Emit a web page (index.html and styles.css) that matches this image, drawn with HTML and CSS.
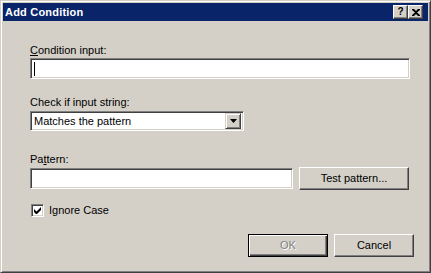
FILE: index.html
```html
<!DOCTYPE html>
<html>
<head>
<meta charset="utf-8">
<link rel="stylesheet" href="styles.css">
</head>
<body>
<div class="window">
  <div class="titlebar">
    <span class="title">Add Condition</span>
    <div class="caption-buttons">
      <div class="cap-btn help">?</div>
      <div class="cap-btn close">
        <svg width="8" height="7" viewBox="0 0 8 7"><path d="M0 0h2l2 2 2-2h2v1L5 3.5 8 6v1H6L4 5 2 7H0V6l3-2.5L0 1z" fill="#000"/></svg>
      </div>
    </div>
  </div>
  <div class="content">
    <div class="label"><u>C</u>ondition input:</div>
    <div class="field wide"><span class="caret"></span></div>

    <div class="label gap2">Check if input string:</div>
    <div class="field select">
      <span class="select-text">Matches the pattern</span>
      <div class="drop-btn">
        <svg width="7" height="4" viewBox="0 0 7 4"><path d="M0 0h7L3.5 4z" fill="#000"/></svg>
      </div>
    </div>

    <div class="label gap3">Pa<u>t</u>tern:</div>
    <div class="pattern-row">
      <div class="field pattern"></div>
      <div class="btn test">Test pattern...</div>
    </div>

    <div class="check-row">
      <div class="checkbox">
        <svg width="7" height="7" viewBox="0 0 7 7"><path d="M0 2v3l2 2h1l4-4V0L2.5 4.5z" fill="#000"/></svg>
      </div>
      <span class="check-label">Ignore Case</span>
    </div>

    <div class="button-row">
      <div class="btn default disabled">OK</div>
      <div class="btn">Cancel</div>
    </div>
  </div>
</div>
</body>
</html>
```
FILE: styles.css
```css
html, body {
  margin: 0;
  padding: 0;
  background: #d4d0c8;
}
body {
  font-family: "Liberation Sans", Arial, sans-serif;
  font-size: 11px;
  color: #000;
}
.window {
  box-sizing: border-box;
  width: 431px;
  height: 273px;
  background: #d4d0c8;
  border: 1px solid;
  border-color: #d4d0c8 #404040 #404040 #d4d0c8;
  box-shadow: inset 1px 1px #fff, inset -1px -1px #808080;
  padding: 2px;
}
.titlebar {
  height: 18px;
  background: #0a246a;
  display: flex;
  align-items: center;
  justify-content: space-between;
  padding-left: 2px;
}
.title {
  color: #fff;
  font-weight: bold;
  font-size: 11px;
  line-height: 13px;
  letter-spacing: 0.2px;
}
.caption-buttons {
  display: flex;
  margin-right: 5px;
}
.cap-btn {
  box-sizing: border-box;
  width: 15px;
  height: 14px;
  background: #d4d0c8;
  border: 1px solid;
  border-color: #fff #404040 #404040 #fff;
  box-shadow: inset -1px -1px #808080;
  display: flex;
  align-items: center;
  justify-content: center;
  font-weight: bold;
  font-size: 10px;
  line-height: 10px;
}
.content {
  display: flex;
  flex-direction: column;
  align-items: flex-start;
  padding: 23px 14px 0 27px;
}
.label {
  line-height: 13px;
  height: 13px;
  margin-bottom: 1px;
}
.gap2 { margin-top: 17px; margin-bottom: 2px; }
.gap3 { margin-top: 22px; margin-bottom: 1px; }
u { text-decoration: underline; text-underline-offset: 1px; }
.field {
  box-sizing: border-box;
  background: #fff;
  border: 1px solid;
  border-color: #808080 #fff #fff #808080;
  box-shadow: inset 1px 1px #404040, inset -1px -1px #d4d0c8;
  height: 21px;
}
.wide {
  width: 380px;
  display: flex;
  align-items: center;
  padding-left: 3px;
}
.caret {
  width: 1px;
  height: 14px;
  background: #000;
}
.select {
  width: 214px;
  height: 20px;
  display: flex;
  align-items: center;
  justify-content: space-between;
  padding: 2px;
}
.select-text {
  padding-left: 1px;
  line-height: 13px;
}
.drop-btn {
  box-sizing: border-box;
  width: 16px;
  height: 16px;
  background: #d4d0c8;
  border: 1px solid;
  border-color: #d4d0c8 #404040 #404040 #d4d0c8;
  box-shadow: inset 1px 1px #fff, inset -1px -1px #808080;
  display: flex;
  align-items: center;
  justify-content: center;
}
.pattern-row {
  display: flex;
  align-items: center;
  gap: 6px;
}
.pattern {
  width: 263px;
}
.btn {
  box-sizing: border-box;
  width: 80px;
  height: 23px;
  background: #d4d0c8;
  border: 1px solid;
  border-color: #fff #404040 #404040 #fff;
  box-shadow: inset -1px -1px #808080;
  display: flex;
  align-items: center;
  justify-content: center;
  line-height: 13px;
}
.test {
  width: 110px;
}
.btn.default {
  border-color: #000;
  box-shadow: inset 1px 1px #fff, inset -1px -1px #404040, inset -2px -2px #808080;
}
.btn.disabled {
  color: #808080;
  text-shadow: 1px 1px #fff;
}
.check-row {
  display: flex;
  align-items: center;
  margin-top: 14px;
  margin-left: 1px;
}
.checkbox {
  box-sizing: border-box;
  width: 13px;
  height: 13px;
  background: #fff;
  border: 1px solid;
  border-color: #808080 #fff #fff #808080;
  box-shadow: inset 1px 1px #404040, inset -1px -1px #d4d0c8;
  display: flex;
  align-items: center;
  justify-content: center;
}
.check-label {
  margin-left: 5px;
  line-height: 13px;
}
.button-row {
  display: flex;
  gap: 6px;
  align-self: flex-end;
  margin-top: 17px;
}
```
